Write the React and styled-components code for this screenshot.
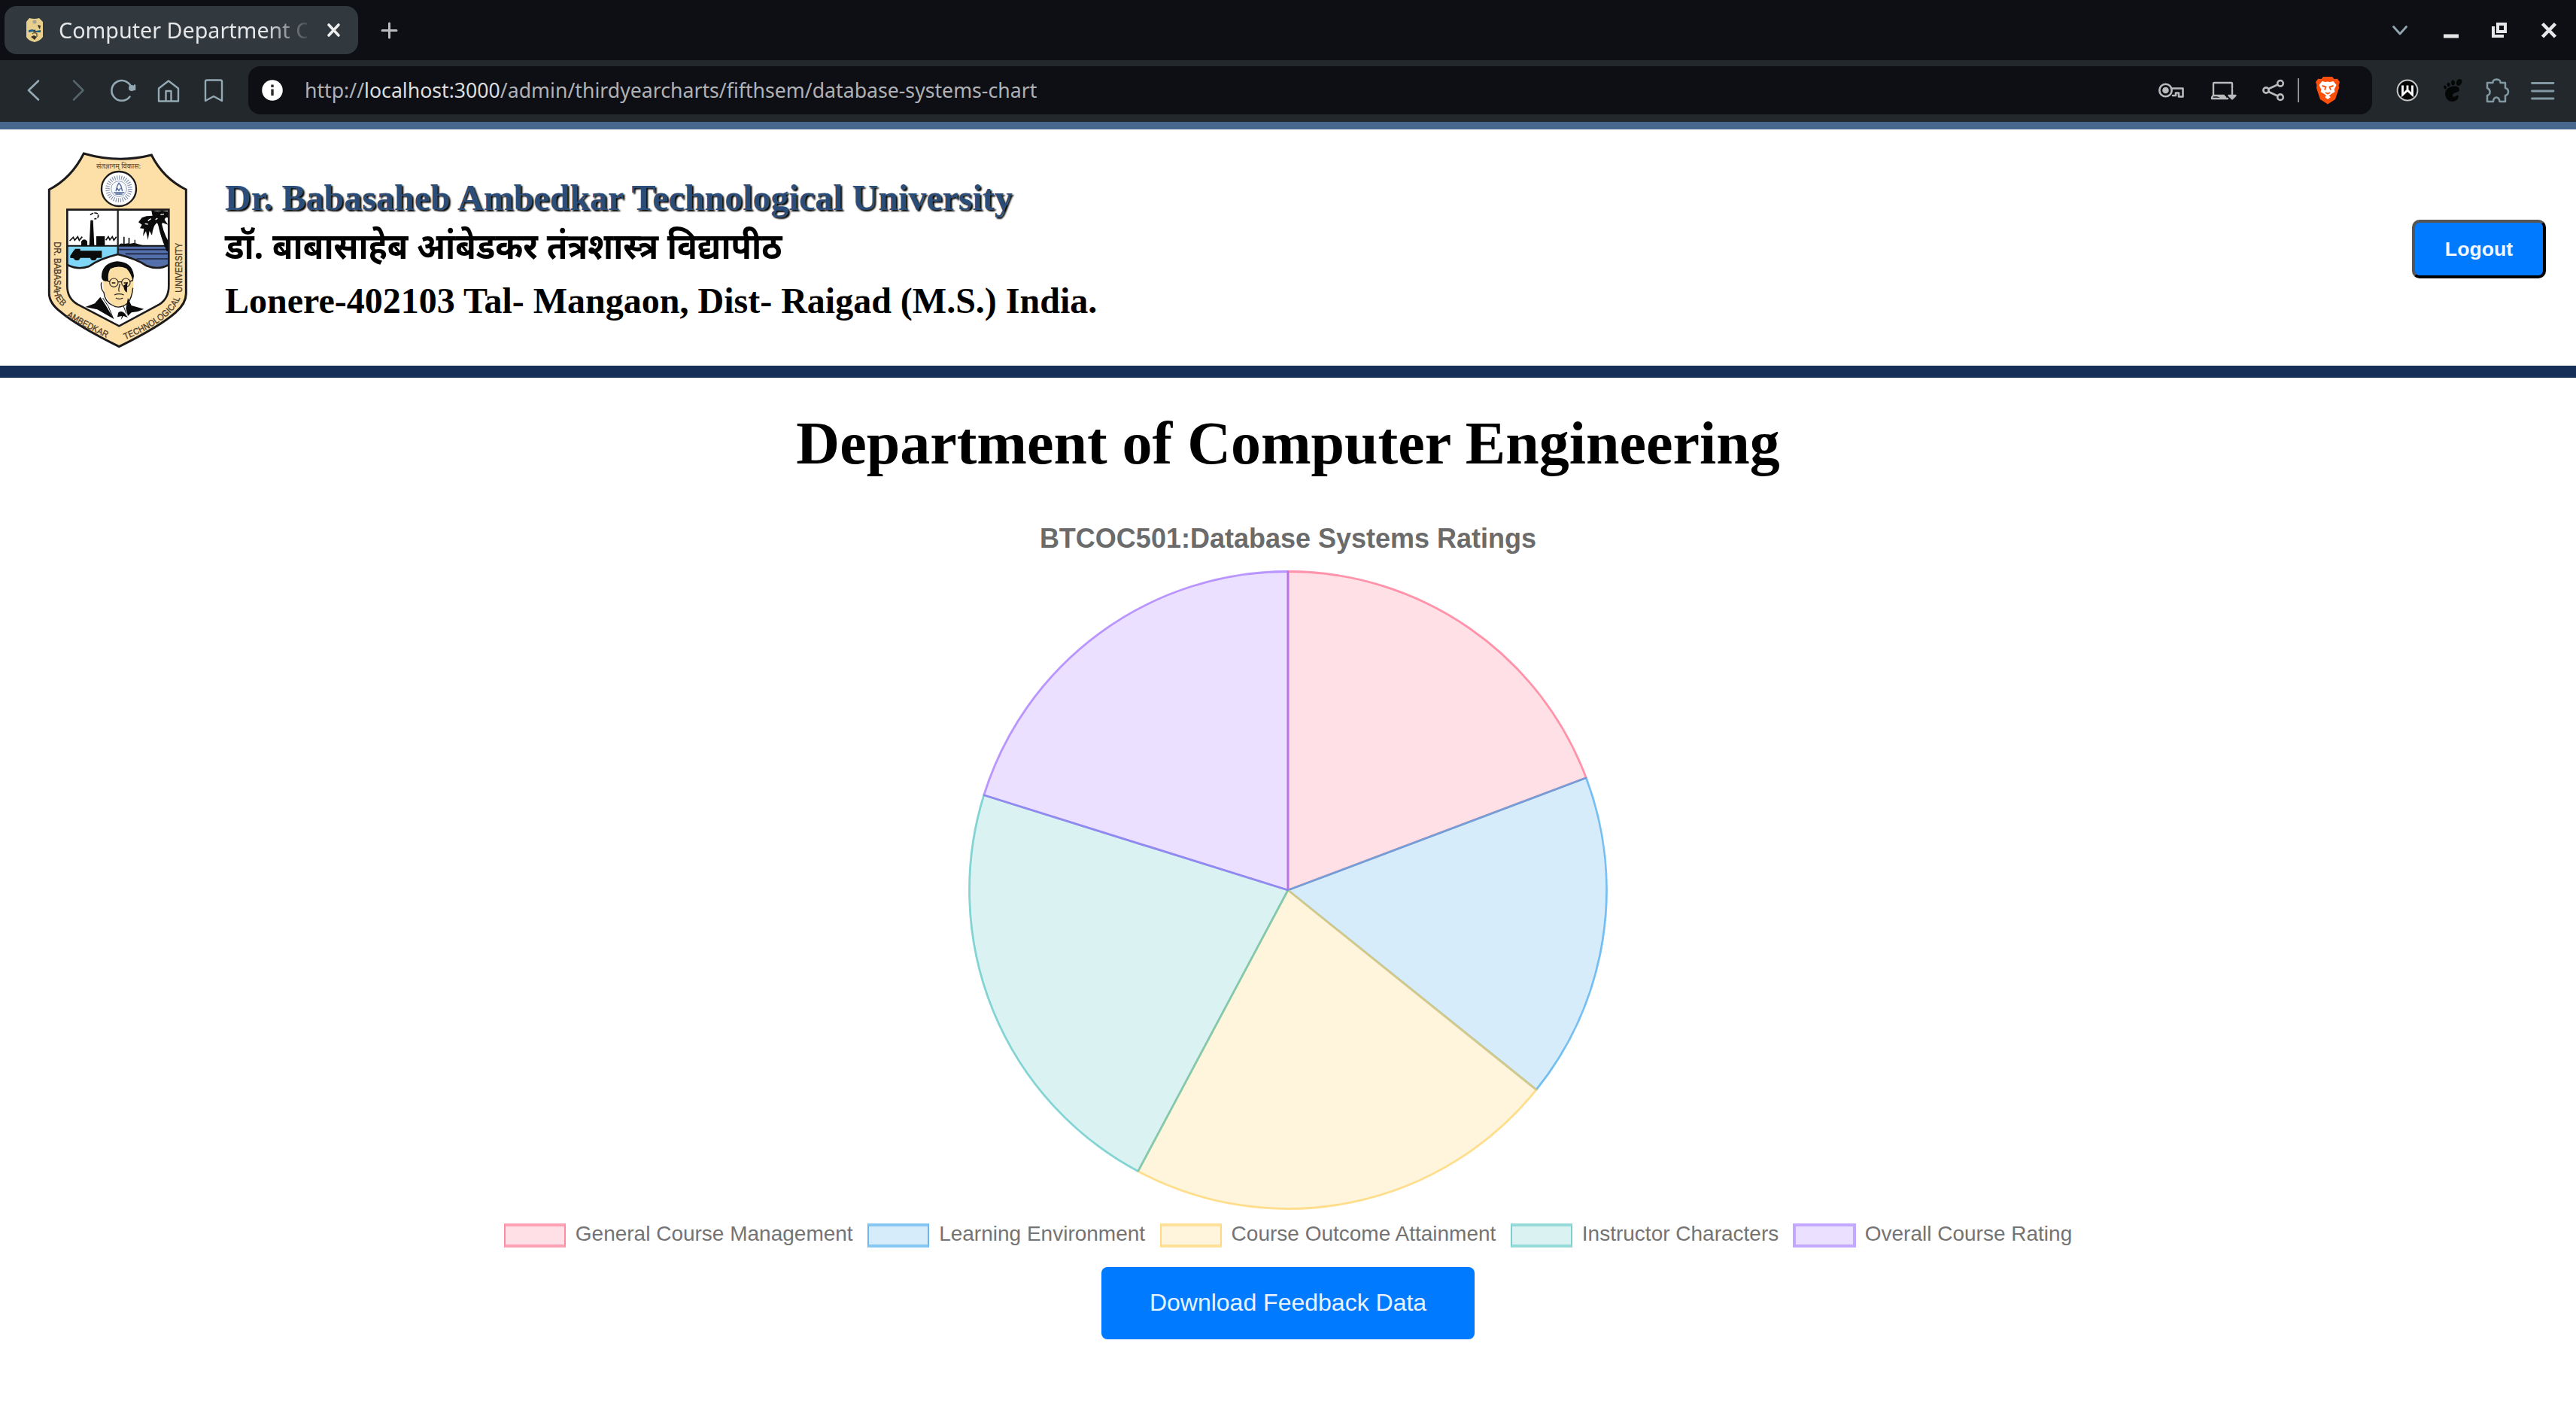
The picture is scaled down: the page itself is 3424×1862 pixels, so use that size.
import React from "react";
import styled, { createGlobalStyle } from "styled-components";

const Global = createGlobalStyle`
  * { box-sizing: border-box; }
  html, body { margin: 0; background: #fff; }
  h1, h2, p { margin: 0; }
  svg { display: block; flex: none; }
`;

const serif = `"Liberation Serif", "Times New Roman", serif`;
const sans = `"Liberation Sans", Arial, sans-serif`;
const ui = `"Noto Sans", "Open Sans", sans-serif`;

const Page = styled.div`
  width: 3424px;
  height: 1862px;
  overflow: hidden;
  background: #fff;
`;

/* ---------- browser chrome ---------- */
const TitleBar = styled.div`
  display: flex;
  align-items: flex-start;
  height: 80px;
  padding: 8px 16px 0 6px;
  background: #0d0f14;
`;
const Tab = styled.div`
  display: flex;
  align-items: center;
  width: 470px;
  height: 64px;
  padding-left: 28px;
  border-radius: 16px;
  background: #31393e;
`;
const TabTitle = styled.div`
  width: 330px;
  margin-left: 20px;
  overflow: hidden;
  white-space: nowrap;
  font: 400 28.7px/40px ${ui};
  color: #e4e6e8;
  mask-image: linear-gradient(to right, #000 274px, rgba(0, 0, 0, 0.12) 330px);
`;
const Cell = styled.span`
  display: flex;
  align-items: center;
  justify-content: center;
  flex: none;
  width: ${(p) => p.$w || 40}px;
  height: ${(p) => p.$h || 64}px;
  margin-left: ${(p) => p.$gap || 0}px;
`;
const Spacer = styled.div`
  flex: 1;
`;
const Toolbar = styled.div`
  display: flex;
  align-items: flex-start;
  height: 82px;
  padding: 8px 24px 0 14px;
  background: #22282c;
`;
const AddressBar = styled.div`
  display: flex;
  align-items: center;
  width: 2823px;
  height: 64px;
  margin-left: 16px;
  padding: 0 39px 0 12px;
  border-radius: 16px;
  background: #0d0f14;
`;
const Url = styled.div`
  margin-left: 23px;
  white-space: nowrap;
  font: 400 26.67px/40px ${ui};
  color: #dcddde;
`;
const Muted = styled.span`
  color: #b0b1b4;
`;
const Divider = styled.div`
  width: 2px;
  height: 32px;
  margin: 0 6px 0 12px;
  background: #8f9092;
`;
const Stripe = styled.div`
  height: ${(p) => p.$h}px;
  background: ${(p) => p.$color};
`;

/* ---------- page header ---------- */
const Header = styled.header`
  display: flex;
  align-items: flex-start;
  height: 314px;
  padding: 18px 40px 0;
`;
const Names = styled.div`
  display: flex;
  flex-direction: column;
  margin: 46px 0 0 29px;
  white-space: nowrap;
  font: 700 48px/54px ${serif};
  color: #000;
`;
const University = styled.h2`
  font: inherit;
  color: #2a4d7a;
  text-shadow: 2px 2px 2px #000;
`;
const Marathi = styled.p`
  margin: 8px 0 6px;
  font: 700 48px/69px "Noto Sans Devanagari", "Noto Sans", sans-serif;
  transform: scaleX(0.93);
  transform-origin: left center;
`;
const Logout = styled.button`
  width: 178px;
  height: 78px;
  margin-top: 102px;
  padding: 0;
  border: 4px solid;
  border-color: #555 #000 #000 #555;
  border-radius: 10px;
  background: #007bff;
  color: #f2f7ff;
  font: 700 26.67px/32px ${sans};
`;

/* ---------- chart ---------- */
const Main = styled.main`
  display: flex;
  flex-direction: column;
  align-items: center;
  padding-top: 41px;
`;
const Department = styled.h1`
  font: 700 80px/92px ${serif};
  color: #000;
  white-space: nowrap;
`;
const ChartTitle = styled.h2`
  margin-top: 59px;
  font: 700 36px/44px ${sans};
  color: #6b6b6b;
  white-space: nowrap;
`;
const PieSvg = styled.svg`
  width: 860px;
  height: 860px;
  margin-top: 15px;
`;
const Legend = styled.div`
  display: flex;
  gap: 19.5px;
  height: 32px;
  margin-top: 13px;
`;
const LegendItem = styled.div`
  display: flex;
  gap: 13px;
  font: 400 28px/28px ${sans};
  color: #747474;
  white-space: nowrap;
`;
const Swatch = styled.span`
  width: ${(p) => (p.$wide ? 84 : 82)}px;
  height: 32px;
  margin-right: ${(p) => (p.$wide ? -1 : 0)}px;
  margin-left: ${(p) => (p.$wide ? -1 : 0)}px;
  border: solid;
  border-width: 4px ${(p) => (p.$wide ? 4 : 2)}px;
  border-color: ${(p) => p.$light} ${(p) => (p.$wide ? p.$light : p.$dark)};
  background: ${(p) => p.$fill};
`;
const Download = styled.button`
  width: 496px;
  height: 96px;
  margin-top: 26px;
  padding: 0 0 2px;
  border: 0;
  border-radius: 8px;
  background: #007bff;
  color: #e9f3ff;
  font: 400 32px/40px ${sans};
`;

const steel = "#8ea2ab";
const Line = ({ w = 40, h = 40, color = steel, sw = 2.4, children }) => (
  <svg width={w} height={h} viewBox={`0 0 ${w} ${h}`} fill="none" stroke={color} strokeWidth={sw} strokeLinecap="round" strokeLinejoin="round">
    {children}
  </svg>
);

const motto = [
  { id: "west", d: "M104 394 V590 Q104 622 150 658", text: "DR. BABASAHEB", len: 262 },
  { id: "southwest", d: "M150 684 Q210 722 330 778", text: "AMBEDKAR", len: 180 },
  { id: "southeast", d: "M376 776 Q500 724 556 668 Q586 636 592 604", text: "TECHNOLOGICAL", len: 275 },
  { id: "east", d: "M597 596 V392", text: "UNIVERSITY", len: 198 },
];

const Crest = () => (
  <svg width="230" height="290" viewBox="0 0 690 870">
    <defs>
      {motto.map((m) => (
        <path key={m.id} id={m.id} d={m.d} />
      ))}
      <clipPath id="inner">
        <path d="M148 266 H553 V570 Q553 620 515 644 L355 730 L190 644 Q148 620 148 570 Z" />
      </clipPath>
    </defs>
    <path d="M214 42 Q350 82 484 48 Q530 140 622 186 V600 Q622 640 580 676 Q520 730 355 812 Q190 730 125 676 Q76 640 76 600 V186 Q165 140 214 42 Z" fill="#fde0a8" stroke="#1d1a1c" strokeWidth="9" />
    <text x="353" y="101" textAnchor="middle" textLength="178" lengthAdjust="spacingAndGlyphs" fontFamily="Noto Sans Devanagari, Noto Sans, sans-serif" fontSize="27" fontWeight="500" fill="#6b563c">संतज्ञानम् विकास:</text>
    <circle cx="354" cy="183" r="69" fill="#fff" stroke="#1d1a1c" strokeWidth="7" />
    <circle cx="354" cy="183" r="45" fill="none" stroke="#8291ae" strokeWidth="17" strokeDasharray="3.4 5.4" />
    <circle cx="354" cy="183" r="31" fill="#f7f9fc" stroke="#8fa0bd" strokeWidth="3" />
    <path d="M334 198 H376 M340 204 H368 M342 192 L348 170 L354 160 L362 170 L368 192 M347 180 L354 190 L361 180" fill="none" stroke="#4d659a" strokeWidth="4" />
    <path d="M148 266 H553 V570 Q553 620 515 644 L355 730 L190 644 Q148 620 148 570 Z" fill="#fff" />
    <g clipPath="url(#inner)">
      <path d="M148 410 H350 V444 Q270 470 235 492 Q190 508 148 486 Z" fill="#7fd6f7" />
      <path d="M350 410 H553 V486 Q510 508 460 490 Q420 462 350 444 Z" fill="#5470ab" />
      <path d="M350 425 H553 M380 442 H553 M425 462 H553" stroke="#1d2240" strokeWidth="5" />
      <path d="M148 410 H553" stroke="#111" strokeWidth="6" />
      <path d="M148 486 Q190 508 235 492 Q275 462 350 444 Q425 462 465 490 Q510 508 553 486" fill="none" stroke="#1d1a1c" strokeWidth="8" />
      <path d="M350 266 V444" stroke="#222" strokeWidth="7" />
      <path d="M241 308 H251 L256 408 H236 Z M204 408 V392 Q216 378 228 392 V408 Z M264 372 H298 V408 H264 Z" fill="#0b0b0b" />
      <path d="M240 287 Q254 274 270 282 Q278 300 256 303" fill="none" stroke="#111" strokeWidth="5" strokeDasharray="14 4" />
      <path d="M158 390 L172 376 L178 388 L190 374 L196 388 L208 374 M302 388 L312 374 L318 386 L328 374 L334 388 L344 374" fill="none" stroke="#111" strokeWidth="5" />
      <path d="M160 450 L172 432 L180 422 H200 V430 H286 V458 H266 Q262 470 252 468 Q242 468 240 458 H200 Q196 470 186 468 Q176 470 174 460 L160 458 Z" fill="#0b0b0b" />
      <path d="M354 408 Q360 398 372 402 V374 H377 V402 L392 400 V378 H397 V402 L416 398 V386 H420 V400 L440 406 L466 412 Z" fill="#111" />
      <path d="M508 300 Q510 350 545 432 H556 V400 Q526 350 522 300 Z" fill="#0b0b0b" />
      <path d="M483 266 Q500 276 526 270 L553 274 L552 300 Q540 292 536 306 L550 326 L528 318 L518 340 L506 318 Q490 330 486 368 L476 350 L470 386 L462 352 L450 372 L454 342 L438 340 L446 326 L432 316 L446 298 L464 292 L488 290 Z" fill="#0b0b0b" />
      <path d="M470 310 L482 302 M520 286 L534 284 M500 306 L508 300 M458 322 L470 324" stroke="#fff" strokeWidth="4" />
    </g>
    <path d="M290 560 Q286 500 318 484 Q352 470 392 486 Q416 506 412 560 Q414 610 390 640 Q356 668 322 640 Q294 612 290 560 Z" fill="#fbdfa4" />
    <path d="M302 552 Q280 550 286 520 Q294 478 346 472 Q408 474 414 530 L410 552 Q404 520 384 500 Q350 486 320 502 Q308 522 312 548 Z" fill="#0d0c0c" />
    <path d="M284 556 Q280 580 294 596 Q298 634 330 648 Q356 664 388 640 Q406 620 410 578" fill="none" stroke="#1a1613" strokeWidth="4" />
    <circle cx="334" cy="557" r="17" fill="none" stroke="#2b2520" strokeWidth="3.4" />
    <circle cx="382" cy="557" r="17" fill="none" stroke="#2b2520" strokeWidth="3.4" />
    <path d="M306 549 L318 553 M351 554 H366 M398 552 L410 548 M326 558 H340 M374 558 H390" stroke="#151210" strokeWidth="4" />
    <path d="M358 562 Q350 590 356 592 M336 606 Q354 598 374 606 M342 618 Q356 626 370 618" fill="none" stroke="#2b2520" strokeWidth="4" />
    <path d="M372 570 L388 556 L386 596 Q376 594 372 570 Z" fill="#120f0e" />
    <path d="M220 654 L258 640 L280 614 L302 648 L334 702 L268 664 Z M390 618 L404 648 L454 662 L430 672 L404 676 L390 690 L382 660 Z M352 676 Q366 666 378 680 L390 696 L372 690 L362 706 L366 690 L348 694 Z" fill="#0c0b0b" />
    <path d="M290 618 L312 652 L332 700 M372 650 L384 680" fill="none" stroke="#1a1613" strokeWidth="3" />
    <path d="M148 266 H553 V570 Q553 620 515 644 L355 730 L190 644 Q148 620 148 570 Z" fill="none" stroke="#1d1a1c" strokeWidth="8" />
    {motto.map((m) => (
      <text key={m.id} fontFamily="Liberation Sans Narrow, Liberation Sans, Arial, sans-serif" fontWeight="400" fontSize="36" fill="#4a3c2c" stroke="#4a3c2c" strokeWidth="1" textLength={m.len} lengthAdjust="spacingAndGlyphs" dominantBaseline="middle">
        <textPath href={`#${m.id}`} textLength={m.len} lengthAdjust="spacingAndGlyphs">
          {m.text}
        </textPath>
      </text>
    ))}
  </svg>
);

const Favicon = () => (
  <svg width="24" height="34" viewBox="0 0 24 34">
    <path d="M5 1 Q12 3 18 1 L23 6 V26 Q20 31 12 33 Q3 31 1 26 V6 Z" fill="#e9cf8d" />
    <circle cx="12" cy="6" r="2.6" fill="#a9a391" />
    <path d="M4 17 L9 16 L14 18 L20 17 V20 L14 20 L9 19 L4 20 Z" fill="#1d5b85" />
    <path d="M16 10 L20 11 L19 16 L17 13 Z M10 18 L13 16 L13 20 Z M7 26 L11 24 L15 26 L12 30 Z" fill="#3a3326" />
    <path d="M9 22 Q12 19 15 22 V26" fill="none" stroke="#6b5a35" strokeWidth="1.4" />
  </svg>
);

const slices = [
  { label: "General Course Management", end: 69.36, fill: "#ffe0e6", dark: "#ff8aa3", light: "#ffa1b5", rgb: "255,99,132" },
  { label: "Learning Environment", end: 128.8, fill: "#d7ecfb", dark: "#6bb8f0", light: "#86c7f3", rgb: "54,162,235" },
  { label: "Course Outcome Attainment", end: 208.07, fill: "#fff5dd", dark: "#ffd97f", light: "#ffe19a", rgb: "255,206,86" },
  { label: "Instructor Characters", end: 287.34, fill: "#dbf2f2", dark: "#7ccfcf", light: "#96dada", rgb: "75,192,192" },
  { label: "Overall Course Rating", end: 360, fill: "#ebe0ff", dark: "#c2a8ff", light: "#c2a8ff", rgb: "153,102,255", wide: true },
];

const point = (deg, r = 423.5) => {
  const a = (deg * Math.PI) / 180;
  return `${430 + r * Math.sin(a)} ${430 - r * Math.cos(a)}`;
};

const Pie = () => (
  <PieSvg viewBox="0 0 860 860">
    {slices.map((s, i) => {
      const start = i ? slices[i - 1].end : 0;
      return (
        <path
          key={s.label}
          d={`M430 430 L${point(start)} A423.5 423.5 0 0 1 ${point(s.end)} Z`}
          fill={`rgba(${s.rgb},0.2)`}
          stroke={`rgba(${s.rgb},0.65)`}
          strokeWidth="2.8"
          strokeLinejoin="bevel"
        />
      );
    })}
  </PieSvg>
);

export default function App() {
  return (
    <Page>
      <Global />
      <TitleBar>
        <Tab>
          <Favicon />
          <TabTitle>Computer Department C</TabTitle>
          <Cell $gap={16}>
            <Line color="#eceeef" sw={3.6}>
              <path d="M13 13 L26 27 M26 13 L13 27" />
            </Line>
          </Cell>
        </Tab>
        <Cell $gap={22}>
          <Line color="#b9bbbd" sw={3}>
            <path d="M19.5 11 V30 M10 20.5 H29" />
          </Line>
        </Cell>
        <Spacer />
        <Cell>
          <Line color="#93a7b0" sw={2.8}>
            <path d="M11.5 15.5 L20 25 L28.5 15.5" />
          </Line>
        </Cell>
        <Cell $gap={28}>
          <Line>
            <rect x="10" y="25.5" width="20" height="5" fill="#e6e7e9" stroke="none" />
          </Line>
        </Cell>
        <Cell $gap={24}>
          <svg width="40" height="40" viewBox="0 0 40 40" fill="none" stroke="#e6e7e9" strokeWidth="4">
            <path d="M18 12 H28 V22 H18 Z" strokeWidth="4" />
            <path d="M12 15 V28 H26" />
          </svg>
        </Cell>
        <Cell $gap={26}>
          <svg width="40" height="40" viewBox="0 0 40 40" fill="none" stroke="#e6e7e9" strokeWidth="4.6">
            <path d="M11.5 11.5 L28.5 29 M28.5 11.5 L11.5 29" />
          </svg>
        </Cell>
      </TitleBar>

      <Toolbar>
        <Cell $w={60}>
          <Line color="#93a9b3" sw={2.6}><path d="M27 7.5 L14 20 L27 32.5" /></Line>
        </Cell>
        <Cell $w={60}>
          <Line color="#55646b" sw={2.6}><path d="M14 7.5 L26.5 20 L14 32.5" /></Line>
        </Cell>
        <Cell $w={60}>
          <Line color="#93a9b3" sw={2.6}>
            <path d="M31 18 A13.4 13.4 0 1 0 28.5 28.5" />
            <circle cx="31" cy="17" r="4" fill="#93a9b3" stroke="none" />
            <path d="M35 13.5 V19" />
          </Line>
        </Cell>
        <Cell $w={60}>
          <Line color="#93a9b3">
            <path d="M7 17.5 L20 7.5 L33 17.5 V34.5 H7 Z M16.5 34 V21 H23.5 V34" />
          </Line>
        </Cell>
        <Cell $w={60}>
          <Line color="#93a9b3">
            <path d="M11 6.5 H29 Q31 6.5 31 8.5 V34 L20 28 L9 34 V8.5 Q9 6.5 11 6.5 Z" />
          </Line>
        </Cell>
        <AddressBar>
          <Cell>
            <svg width="40" height="40" viewBox="0 0 40 40">
              <circle cx="20" cy="20" r="13.8" fill="#fff" />
              <path d="M20 12.5 V16 M20 18.5 V27" stroke="#2a2c30" strokeWidth="3.4" />
            </svg>
          </Cell>
          <Url>
            <Muted>http://</Muted>localhost:3000<Muted>/admin/thirdyearcharts/fifthsem/database-systems-chart</Muted>
          </Url>
          <Spacer />
          <Cell>
            <Line color="#b9babc" sw={2.6}>
              <circle cx="12.5" cy="20" r="8.2" />
              <circle cx="12.5" cy="20" r="3" fill="#b9babc" />
              <path d="M20 17.5 H35.5 V28.5 H30 V23.5 H26 V27 H22" />
            </Line>
          </Cell>
          <Cell $gap={30}>
            <Line color="#b9babc" sw={2.4}>
              <path d="M31 17 V11 Q31 10 30 10 H7 Q6 10 6 11 V27 H20 M6 27 Q4 28 4 31 H25 M12 27.5 L16 29 H22" />
              <path d="M31 19 V30 M26.5 27 L31 31.5 L35.5 27 Z" fill="#b9babc" />
            </Line>
          </Cell>
          <Cell $gap={26}>
            <Line color="#b9babc" sw={2.6}>
              <circle cx="10" cy="20" r="3.6" />
              <circle cx="29" cy="10.8" r="3.8" />
              <circle cx="29" cy="29.2" r="3.8" />
              <path d="M13.5 18 L25.4 12.5 M13.5 22 L25.4 27.5" />
            </Line>
          </Cell>
          <Divider />
          <Cell $gap={12}>
            <svg width="40" height="40" viewBox="0 0 40 40">
              <path d="M14 2 H26 L28.5 5 L33 4.8 L36 9 L34.6 13 L35 17 L30 32 L20 38.5 L10 32 L5 17 L5.4 13 L4 9 L7 4.8 L11.5 5 Z" fill="#fb4f0b" />
              <path d="M12.5 8 L17 9 L20 8.6 L23 9 L27.5 8 L31.5 13 L28.5 19 L29.5 22 L24.5 25 L20 29 L15.5 25 L10.5 22 L11.5 19 L8.5 13 Z" fill="#fff" />
              <path d="M16 29 L20 26.5 L24 29 L20 32 Z" fill="#fff" />
              <path d="M12.5 14 L17.5 15.5 L16 19.5 M27.5 14 L22.5 15.5 L24 19.5 M17 23 L20 24.5 L23 23" fill="none" stroke="#fb4f0b" strokeWidth="1.9" />
            </svg>
          </Cell>
        </AddressBar>
        <Cell $gap={27}>
          <svg width="40" height="40" viewBox="0 0 40 40" fill="none">
            <circle cx="20" cy="20" r="13.4" fill="#060606" stroke="#c4c5c6" strokeWidth="2" />
            <path d="M13.5 13.5 V26 L20 20 L26.5 26 V13.5 M20 13.5 V20" stroke="#fff" strokeWidth="2.8" />
          </svg>
        </Cell>
        <Cell $gap={20}>
          <svg width="40" height="40" viewBox="0 0 40 40" fill="#050606">
            <path d="M29 19 Q28 13 19 15 Q9 18 10 26 Q12 35 20 35 Q27 34 28 28 Q27 25 24 28 Q20 30 20 27 Q20 24 24 23 Q29 22 29 19 Z" />
            <ellipse cx="28.5" cy="9.5" rx="3.4" ry="4.6" transform="rotate(24 28.5 9.5)" />
            <ellipse cx="20.5" cy="10" rx="2.4" ry="3.4" />
            <ellipse cx="14.6" cy="12.5" rx="2" ry="2.8" />
            <ellipse cx="10" cy="16" rx="1.8" ry="2.4" transform="rotate(-20 10 16)" />
          </svg>
        </Cell>
        <Cell $gap={20}>
          <Line color="#8299a4" sw={2.5}>
            <path d="M6 10 H13.5 Q13 6 18.5 5.5 Q24 6 23.5 10 H30 V17 Q34 18 34 22 Q34 26 30 27 V35 H22.5 Q22 29.5 18 29.5 Q14.5 29.5 14 35 H6 V27 Q10 25.5 9.5 22 Q9.5 18.5 6 17 Z" />
          </Line>
        </Cell>
        <Cell $gap={20}>
          <Line color="#8299a4" sw={2.8}>
            <path d="M5.5 10.5 H34 M5.5 21 H34 M5.5 31 H34" />
          </Line>
        </Cell>
      </Toolbar>
      <Stripe $h={10} $color="#48678f" />

      <Header>
        <Crest />
        <Names>
          <University>Dr. Babasaheb Ambedkar Technological University</University>
          <Marathi>डॉ. बाबासाहेब आंबेडकर तंत्रशास्त्र विद्यापीठ</Marathi>
          <p>Lonere-402103 Tal- Mangaon, Dist- Raigad (M.S.) India.</p>
        </Names>
        <Spacer />
        <Logout>Logout</Logout>
      </Header>
      <Stripe $h={16} $color="#152f58" />

      <Main>
        <Department>Department of Computer Engineering</Department>
        <ChartTitle>BTCOC501:Database Systems Ratings</ChartTitle>
        <Pie />
        <Legend>
          {slices.map((s) => (
            <LegendItem key={s.label}>
              <Swatch $fill={s.fill} $dark={s.dark} $light={s.light} $wide={s.wide} />
              {s.label}
            </LegendItem>
          ))}
        </Legend>
        <Download>Download Feedback Data</Download>
      </Main>
    </Page>
  );
}
